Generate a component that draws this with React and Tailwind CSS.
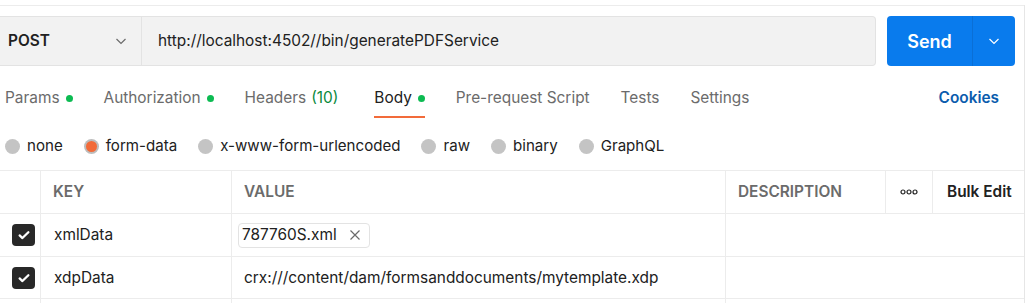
import React from 'react';

const tabs = [
  { name: 'Params', dot: true },
  { name: 'Authorization', dot: true },
  { name: 'Headers', count: '(10)' },
  { name: 'Body', dot: true, active: true },
  { name: 'Pre-request Script' },
  { name: 'Tests' },
  { name: 'Settings' },
];

const bodyTypes = ['none', 'form-data', 'x-www-form-urlencoded', 'raw', 'binary', 'GraphQL'];

const Chevron = ({ className }) => (
  <svg className={className} viewBox="0 0 16 16" fill="none" stroke="currentColor" strokeWidth="1.2">
    <path d="M3.5 6l4.5 4.5L12.5 6" />
  </svg>
);

const Check = () => (
  <span className="flex h-[22px] w-[23px] items-center justify-center rounded-[4px] bg-[#282828]">
    <svg className="h-[14px] w-[14px]" viewBox="0 0 16 16" fill="none" stroke="white" strokeWidth="2.6" strokeLinecap="round" strokeLinejoin="round">
      <path d="M3 8.5l3.2 3L13 4.8" />
    </svg>
  </span>
);

const App = () => {
  return (
    <div className="h-[303px] w-[1031px] overflow-hidden bg-white font-['Inter','Liberation_Sans',sans-serif] text-[15.4px]">
      <div className="h-full w-[1025px] border-r border-[#e6e6e6]">
        {/* Barra de petición */}
        <div className="mt-[5px] border-t border-[#ececec]" />
        <div className="mt-[10px] flex h-[50px]">
          <div className="flex w-[142px] items-center justify-between border-y border-r border-[#e3e3e3] bg-[#f2f2f2] pl-[8px] pr-[12px]">
            <span className="font-semibold text-[#212121]">POST</span>
            <Chevron className="h-[16px] w-[16px] text-[#6b6b6b]" />
          </div>
          <div className="flex w-[734px] items-center rounded-r-[4px] border-y border-r border-[#e3e3e3] bg-[#f2f2f2] pl-[16px] text-[#212121]">
            http://localhost:4502//bin/generatePDFService
          </div>
          <div className="ml-[11px] flex w-[128px] overflow-hidden rounded-[4px] bg-[#097bed] text-white">
            <div className="flex w-[86px] items-center justify-center border-r border-[#0a6fd6] text-[18px] font-semibold">Send</div>
            <div className="flex flex-1 items-center justify-center">
              <Chevron className="h-[16px] w-[16px]" />
            </div>
          </div>
        </div>

        {/* Pestañas */}
        <div className="mt-[21px] flex items-start pl-[5px] pr-[25px]">
          <div className="flex gap-[31px]">
            {tabs.map((tab) => (
              <div
                key={tab.name}
                className={`flex h-[31px] items-start border-b-2 leading-[22px] ${
                  tab.active ? 'border-[#f26b3a] text-[#212121]' : 'border-transparent text-[#6b6b6b]'
                } ${tab.count ? 'mr-[5px]' : ''}`}
              >
                <span>{tab.name}</span>
                {tab.count && <span className="ml-[5px] text-[#0a8a3d]">{tab.count}</span>}
                {tab.dot && <span className="ml-[6px] mt-[8px] h-[7px] w-[7px] rounded-full bg-[#0cbb52]" />}
              </div>
            ))}
          </div>
          <span className="ml-auto font-semibold leading-[22px] text-[#0b5cad]">Cookies</span>
        </div>

        {/* Tipo de cuerpo */}
        <div className="mt-[17px] flex h-[22px] items-center gap-[21px] pl-[5px] text-[15.1px] leading-[22px] text-[#212121]">
          {bodyTypes.map((type) => (
            <div key={type} className="flex items-center gap-[7px]">
              {type === 'form-data' ? (
                <span className="flex h-[15px] w-[15px] items-center justify-center rounded-full bg-[#bdbdbd]">
                  <span className="h-[11px] w-[11px] rounded-full bg-[#f26b3a]" />
                </span>
              ) : (
                <span className="h-[15px] w-[15px] rounded-full bg-[#c4c4c4]" />
              )}
              <span>{type}</span>
            </div>
          ))}
        </div>

        {/* Tabla */}
        <div className="mt-[13px] border-t border-[#ececec] text-[#212121]">
          <div className="flex h-[43px] border-b border-[#ececec] font-semibold text-[#6b6b6b]">
            <div className="w-[41px] border-r border-[#ececec]" />
            <div className="flex w-[191px] items-center border-r border-[#ececec] pl-[12px]">KEY</div>
            <div className="flex w-[494px] items-center border-r border-[#ececec] pl-[12px]">VALUE</div>
            <div className="flex w-[160px] items-center border-r border-[#ececec] pl-[12px]">DESCRIPTION</div>
            <div className="flex w-[47px] items-center justify-center border-r border-[#ececec] text-[#212121]">
              <svg className="h-[6px] w-[18px]" viewBox="0 0 18 6" fill="none" stroke="currentColor" strokeWidth="1.2">
                <circle cx="3" cy="3" r="2" />
                <circle cx="9" cy="3" r="2" />
                <circle cx="15" cy="3" r="2" />
              </svg>
            </div>
            <div className="flex flex-1 items-center pl-[14px] text-[#212121]">Bulk Edit</div>
          </div>

          <div className="flex h-[43px] border-b border-[#ececec]">
            <div className="flex w-[41px] items-center border-r border-[#ececec] pl-[12px]">
              <Check />
            </div>
            <div className="flex w-[191px] items-center border-r border-[#ececec] pl-[13px]">xmlData</div>
            <div className="flex w-[494px] items-center border-r border-[#ececec] pl-[6px]">
              <span className="flex h-[25px] items-center gap-[12px] rounded-[4px] border border-[#e3e3e3] pl-[3px] pr-[8px]">
                787760S.xml
                <svg className="h-[12px] w-[12px] text-[#6b6b6b]" viewBox="0 0 12 12" fill="none" stroke="currentColor" strokeWidth="1.2">
                  <path d="M1.5 1.5l9 9M10.5 1.5l-9 9" />
                </svg>
              </span>
            </div>
            <div className="flex-1" />
          </div>

          <div className="flex h-[42px] border-b border-[#ececec]">
            <div className="flex w-[41px] items-center border-r border-[#ececec] pl-[12px]">
              <Check />
            </div>
            <div className="flex w-[191px] items-center border-r border-[#ececec] pl-[13px]">xdpData</div>
            <div className="flex w-[494px] items-center border-r border-[#ececec] pl-[12px]">
              crx:///content/dam/formsanddocuments/mytemplate.xdp
            </div>
            <div className="flex-1" />
          </div>

          <div className="flex h-[20px]">
            <div className="w-[41px] border-r border-[#ececec]" />
            <div className="w-[191px] border-r border-[#ececec]" />
            <div className="w-[494px] border-r border-[#ececec]" />
          </div>
        </div>
      </div>
    </div>
  );
};

export default App;
